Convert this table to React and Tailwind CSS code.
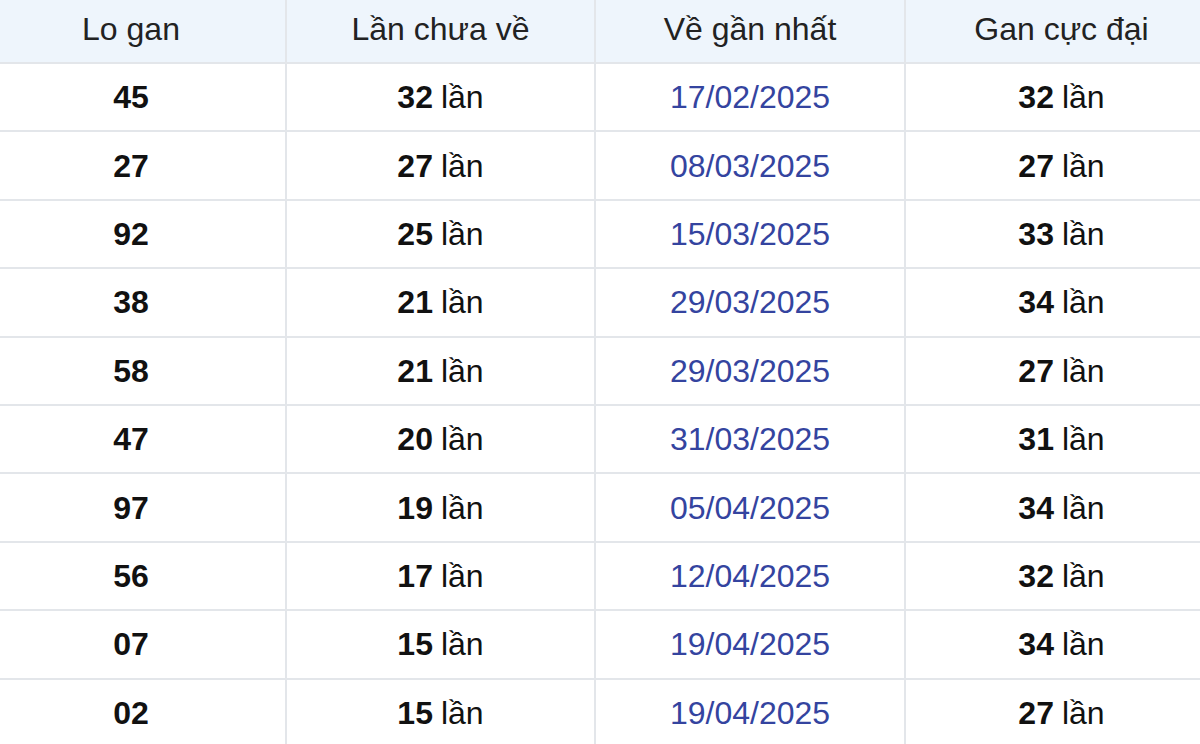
const rows = [
  ["45", "32", "17/02/2025", "32"],
  ["27", "27", "08/03/2025", "27"],
  ["92", "25", "15/03/2025", "33"],
  ["38", "21", "29/03/2025", "34"],
  ["58", "21", "29/03/2025", "27"],
  ["47", "20", "31/03/2025", "31"],
  ["97", "19", "05/04/2025", "34"],
  ["56", "17", "12/04/2025", "32"],
  ["07", "15", "19/04/2025", "34"],
  ["02", "15", "19/04/2025", "27"],
];

const headers = ["Lo gan", "Lần chưa về", "Về gần nhất", "Gan cực đại"];

export default function App() {
  return (
    <div
      className="w-[1200px] h-[744px] overflow-hidden bg-white"
      style={{ fontFamily: '"Liberation Sans", Arial, sans-serif' }}
    >
      <div className="ml-[-23px] w-[1240px]">
        <div className="grid grid-cols-[310px_309px_310px_311px] h-[64px] bg-[#eef5fc] border-b-2 border-[#e3e6ea]">
          {headers.map((h, i) => (
            <div
              key={h}
              className={`flex items-center justify-center text-[32px] text-[#222] pb-[4px] ${i < 3 ? "border-r-2 border-[#e3e6ea]" : ""}`}
            >
              {h}
            </div>
          ))}
        </div>
        {rows.map((r, idx) => (
          <div
            key={idx}
            className="grid grid-cols-[310px_309px_310px_311px] h-[68.4px] border-b-2 border-[#e3e6ea]"
          >
            <div className="flex items-center justify-center border-r-2 border-[#e3e6ea] text-[32px] font-bold text-[#111]">
              {r[0]}
            </div>
            <div className="flex items-center justify-center border-r-2 border-[#e3e6ea] text-[32px] text-[#111]">
              <span className="font-bold">{r[1]}</span>
              <span className="ml-[8px]">lần</span>
            </div>
            <div className="flex items-center justify-center border-r-2 border-[#e3e6ea] text-[32px] text-[#34449f]">
              {r[2]}
            </div>
            <div className="flex items-center justify-center text-[32px] text-[#111]">
              <span className="font-bold">{r[3]}</span>
              <span className="ml-[8px]">lần</span>
            </div>
          </div>
        ))}
      </div>
    </div>
  );
}
